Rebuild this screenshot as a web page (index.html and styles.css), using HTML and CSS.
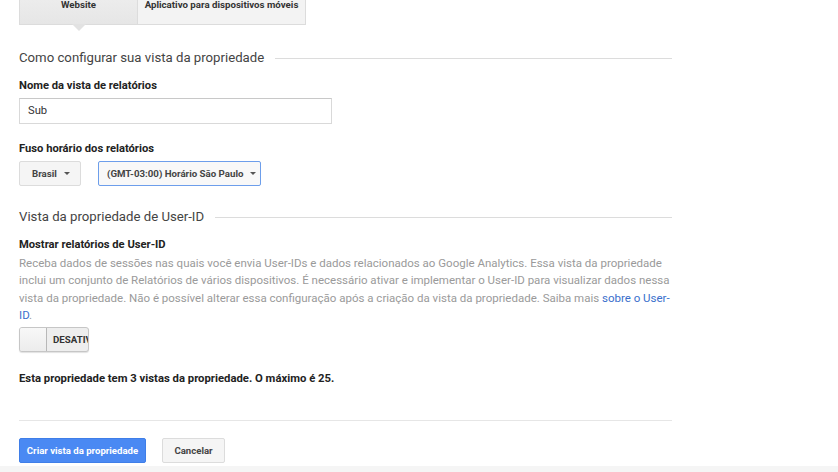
FILE: index.html
```html
<!DOCTYPE html>
<html lang="pt-BR">
<head>
<meta charset="utf-8">
<link rel="stylesheet" href="styles.css">
</head>
<body>
<div class="page">
  <div class="tabs">
    <div class="tab active">Website</div>
    <div class="tab">Aplicativo para dispositivos móveis</div>
  </div>

  <div class="section-title first"><span>Como configurar sua vista da propriedade</span></div>

  <div class="label">Nome da vista de relatórios</div>
  <div class="input">Sub</div>

  <div class="label tz-label">Fuso horário dos relatórios</div>
  <div class="selects">
    <div class="select">Brasil <span class="caret"></span></div>
    <div class="select focused">(GMT-03:00) Horário São Paulo <span class="caret"></span></div>
  </div>

  <div class="section-title second"><span>Vista da propriedade de User-ID</span></div>

  <div class="label">Mostrar relatórios de User-ID</div>
  <p class="desc">Receba dados de sessões nas quais você envia User-IDs e dados relacionados ao Google Analytics. Essa vista da propriedade inclui um conjunto de Relatórios de vários dispositivos. É necessário ativar e implementar o User-ID para visualizar dados nessa vista da propriedade. Não é possível alterar essa configuração após a criação da vista da propriedade. Saiba mais <a href="#">sobre o User-ID</a>.</p>

  <div class="toggle">
    <div class="knob"></div>
    <div class="toggle-label">DESATIVADO</div>
  </div>

  <div class="count">Esta propriedade tem 3 vistas da propriedade. O máximo é 25.</div>

  <div class="divider"></div>

  <div class="actions">
    <div class="btn primary">Criar vista da propriedade</div>
    <div class="btn">Cancelar</div>
  </div>
</div>
<div class="footer-strip"></div>
</body>
</html>
```

FILE: styles.css
```css
html, body {
  margin: 0;
  padding: 0;
  background: #fff;
  font-family: Roboto, "Liberation Sans", Arial, sans-serif;
  color: #222;
  overflow: hidden;
}

.page {
  width: 653px;
  margin-left: 19px;
  height: 466px;
}

.tabs {
  display: flex;
  height: 25px;
}

.tab {
  position: relative;
  box-sizing: border-box;
  height: 25px;
  padding: 0 4px;
  font-size: 9.7px;
  font-weight: bold;
  color: #333;
  line-height: 10px;
  white-space: nowrap;
  background: #f3f3f3;
  border: 1px solid #dcdcdc;
  border-top: none;
  display: flex;
  align-items: flex-start;
  justify-content: center;
}

.tab:first-child {
  width: 119px;
  background: linear-gradient(#ececec, #e6e6e6);
}

.tab:last-child {
  width: 168px;
  border-left: none;
}

.tab.active::after {
  content: "";
  position: absolute;
  left: 52px;
  bottom: -7px;
  width: 0;
  height: 0;
  border-left: 7px solid transparent;
  border-right: 7px solid transparent;
  border-top: 7px solid #e2e2e2;
}

.section-title {
  display: flex;
  align-items: center;
  font-size: 13.2px;
  color: #444;
  line-height: 16px;
}

.section-title::after {
  content: "";
  flex: 1;
  height: 1px;
  background: #dcdcdc;
  margin-left: 11px;
}

.section-title.first {
  margin-top: 25px;
}

.section-title.second {
  margin-top: 23px;
}

.label {
  font-size: 11.2px;
  font-weight: bold;
  color: #222;
  line-height: 14px;
  margin-top: 13px;
}

.input {
  box-sizing: border-box;
  width: 313px;
  height: 26px;
  margin-top: 5px;
  border: 1px solid #d9d9d9;
  border-top-color: #c8c8c8;
  padding: 0 8px;
  font-size: 11.2px;
  line-height: 24px;
  color: #333;
}

.label.tz-label {
  margin-top: 18px;
}

.selects {
  display: flex;
  gap: 17px;
  margin-top: 5px;
}

.select {
  box-sizing: border-box;
  height: 25px;
  padding: 0 8px 0 12px;
  background: #f5f5f5;
  border: 1px solid #dcdcdc;
  border-radius: 2px;
  font-size: 9.7px;
  font-weight: bold;
  color: #444;
  white-space: nowrap;
  display: flex;
  align-items: center;
}

.select:first-child {
  width: 62px;
}

.select.focused {
  width: 163px;
  background: #f8f8f8;
  border-color: #6d9eeb;
  padding-left: 8px;
}

.caret {
  display: inline-block;
  width: 0;
  height: 0;
  border-left: 3px solid transparent;
  border-right: 3px solid transparent;
  border-top: 3px solid #555;
  margin-left: 7px;
}

.desc {
  margin: 3px 0 0;
  font-size: 11.5px;
  line-height: 17.4px;
  color: #9a9a9a;
}

.desc a {
  color: #3a6fcc;
  text-decoration: none;
}

.toggle {
  margin-top: 2px;
  width: 70px;
  height: 25px;
  box-sizing: border-box;
  border: 1px solid #c6c6c6;
  border-radius: 3px;
  background: #eeeeee;
  display: flex;
  overflow: hidden;
  box-shadow: 0 1px 1px rgba(0,0,0,0.12);
}

.knob {
  width: 27px;
  flex: none;
  background: linear-gradient(#f8f8f8, #ececec);
  border-right: 1px solid #b8b8b8;
  box-sizing: border-box;
}

.toggle-label {
  font-size: 9.7px;
  font-weight: bold;
  color: #333;
  line-height: 23px;
  padding-left: 6px;
  white-space: nowrap;
}

.count {
  margin-top: 20px;
  font-size: 11.3px;
  font-weight: bold;
  color: #222;
  line-height: 14px;
}

.divider {
  margin-top: 34px;
  height: 1px;
  background: #e6e6e6;
}

.actions {
  display: flex;
  gap: 16px;
  margin-top: 17px;
}

.btn {
  box-sizing: border-box;
  height: 25px;
  padding: 0 4px;
  border: 1px solid #dcdcdc;
  border-radius: 2px;
  background: #f5f5f5;
  font-size: 9.6px;
  font-weight: bold;
  color: #444;
  white-space: nowrap;
  display: flex;
  align-items: center;
  justify-content: center;
}

.btn:last-child {
  width: 63px;
}

.btn.primary {
  width: 127px;
  background: #4a89f3;
  border-color: #3f7ee8;
  color: #fff;
}

.footer-strip {
  height: 6px;
  background: #f5f5f5;
}
```
